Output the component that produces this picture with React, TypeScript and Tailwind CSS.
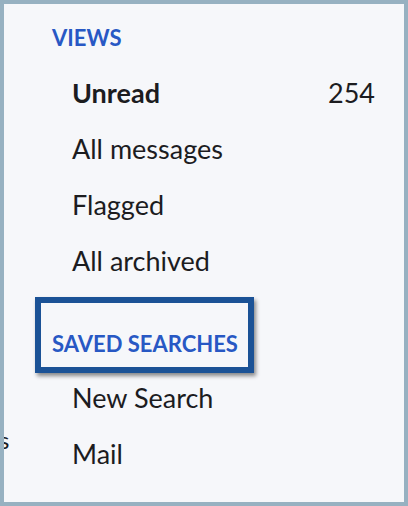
const items = [
  { label: "Unread", count: "254", bold: true },
  { label: "All messages" },
  { label: "Flagged" },
  { label: "All archived" },
];

const searches = ["New Search", "Mail"];

function Row({ label, count, bold }: { label: string; count?: string; bold?: boolean }) {
  return (
    <div className="flex h-[56px] items-center justify-between pl-[68px] pr-[29px] text-[27px] leading-[56px] text-[#1c1c1f]">
      <span className={bold ? "font-bold" : "font-normal"}>{label}</span>
      {count && <span>{count}</span>}
    </div>
  );
}

export default function App() {
  return (
    <div
      className="h-[506px] w-[408px] border-4 border-[#97b1c1] bg-[#f6f7fa]"
      style={{ fontFamily: "Lato, 'Open Sans', sans-serif" }}
    >
      <div className="relative h-full overflow-hidden">
        <div className="pl-[48px] pt-[21px] text-[22px] font-bold leading-[26px] text-[#2858c4]">
          VIEWS
        </div>
        <div className="mt-[14px]">
          {items.map((item) => (
            <Row key={item.label} {...item} />
          ))}
        </div>
        <div className="relative z-10 ml-[31px] mt-[8px] w-[219px] border-[6px] border-[#1b5296] pb-[10px] pl-[11px] pt-[28px] shadow-[2px_3px_4px_rgba(0,0,0,0.45)]">
          <div className="text-[22px] font-bold leading-[26px] text-[#2858c4]">SAVED SEARCHES</div>
        </div>
        <div className="-mt-[3px]">
          {searches.map((label) => (
            <Row key={label} label={label} />
          ))}
        </div>
        <span className="absolute left-[-5px] top-[421px] text-[24px] leading-[29px] text-[#1c1c1f]">s</span>
      </div>
    </div>
  );
}
